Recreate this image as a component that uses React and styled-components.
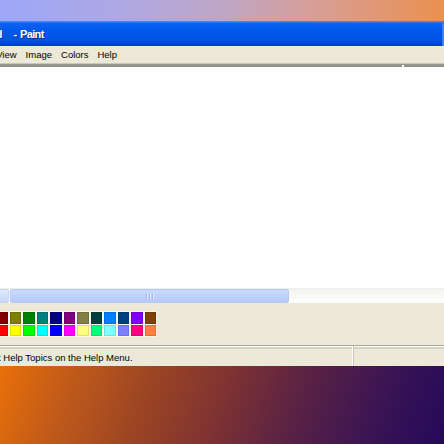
import React from "react";
import styled, { createGlobalStyle } from "styled-components";

const GlobalStyle = createGlobalStyle`
  html, body {
    margin: 0;
    padding: 0;
    overflow: hidden;
  }
  body {
    font-family: "Liberation Sans", Arial, sans-serif;
  }
`;

const PALETTE = [
  ["#000000", "#808080", "#800000", "#808000", "#008000", "#008080", "#000080", "#800080", "#808040", "#004040", "#0080ff", "#004080", "#8000ff", "#804000"],
  ["#ffffff", "#c0c0c0", "#ff0000", "#ffff00", "#00ff00", "#00ffff", "#0000ff", "#ff00ff", "#ffff80", "#00ff80", "#80ffff", "#8080ff", "#ff0080", "#ff8040"],
];

const MENU = ["File", "Edit", "View", "Image", "Colors", "Help"];

function App() {
  return (
    <>
      <GlobalStyle />
      <Page>
        <TopWallpaper />
        <Window>
          <TitleBar>
            <TitleText>
              <FileName>untitled</FileName> - Paint
            </TitleText>
          </TitleBar>
          <MenuBar>
            <MenuRow>
              {MENU.map((m) => (
                <MenuItem key={m}>{m}</MenuItem>
              ))}
            </MenuRow>
          </MenuBar>
          <WorkspaceEdge>
            <Handle />
          </WorkspaceEdge>
          <Canvas />
          <ScrollBar>
            <ScrollButton />
            <ScrollThumb>
              <Grip>
                <span />
                <span />
                <span />
              </Grip>
            </ScrollThumb>
            <ScrollTrack />
          </ScrollBar>
          <PaletteArea>
            <PaletteGrid>
              {PALETTE.flat().map((c, i) => (
                <Swatch key={i} $color={c} />
              ))}
            </PaletteGrid>
          </PaletteArea>
          <StatusBar>
            <StatusMain>
              <StatusText>For Help, click Help Topics on the Help Menu.</StatusText>
            </StatusMain>
            <StatusCell />
          </StatusBar>
        </Window>
        <BottomWallpaper />
      </Page>
    </>
  );
}

export default App;

const Page = styled.div`
  width: 444px;
  height: 444px;
  display: flex;
  flex-direction: column;
  overflow: hidden;
`;

const TopWallpaper = styled.div`
  height: 21px;
  flex: none;
  background: linear-gradient(90deg, #9ea7f8 0%, #aca8e6 25%, #bea6c6 50%, #d89e94 72%, #ea904e 100%);
`;

const Window = styled.div`
  display: flex;
  flex-direction: column;
  flex: none;
  background: #ece9d8;
`;

const TitleBar = styled.div`
  height: 25px;
  display: flex;
  align-items: center;
  overflow: hidden;
  background: linear-gradient(
    180deg,
    #4a92ff 0%,
    #0b62f2 10%,
    #0058ea 40%,
    #0054e3 75%,
    #0046cc 92%,
    #0a3aa8 100%
  );
  border-right: 2px solid #3c7ef0;
`;

const TitleText = styled.span`
  margin-left: -33px;
  color: #ffffff;
  font-weight: bold;
  font-size: 11px;
  letter-spacing: -0.6px;
  word-spacing: 1px;
  white-space: nowrap;
  text-shadow: 1px 1px 0 #0c2a8a;
  padding-top: 1px;
`;

const FileName = styled.span`
  margin-right: 8px;
`;

const MenuBar = styled.div`
  height: 17px;
  display: flex;
  align-items: center;
  overflow: hidden;
  background: #ece9d8;
`;

const MenuRow = styled.div`
  display: flex;
  margin-left: -58px;
`;

const MenuItem = styled.span`
  padding: 0 4.5px;
  font-size: 9.5px;
  color: #000000;
  white-space: nowrap;
`;

const WorkspaceEdge = styled.div`
  height: 4px;
  display: flex;
  justify-content: flex-end;
  align-items: flex-end;
  background: linear-gradient(180deg, #f4f2e8 0%, #9c9a92 25%, #8e8c86 100%);
`;

const Handle = styled.div`
  width: 2px;
  height: 2px;
  margin-right: 40px;
  background: #ffffff;
`;

const Canvas = styled.div`
  height: 221px;
  background: #ffffff;
`;

const ScrollBar = styled.div`
  height: 14px;
  display: flex;
  align-items: stretch;
  background: #f6f6f2;
  border-top: 1px solid #eeeeea;
  overflow: hidden;
`;

const ScrollButton = styled.div`
  width: 14px;
  margin-left: -7px;
  flex: none;
  border: 1px solid #c4d4f8;
  border-radius: 2px;
  background: linear-gradient(180deg, #dfe8fe 0%, #c8d7fb 100%);
`;

const ScrollThumb = styled.div`
  width: 277px;
  flex: none;
  margin-left: 1px;
  display: flex;
  align-items: center;
  justify-content: center;
  border: 1px solid #b5c8f5;
  border-radius: 2px;
  background: linear-gradient(180deg, #cedbfd 0%, #bccffb 60%, #b6cafa 100%);
`;

const Grip = styled.div`
  display: flex;
  gap: 1px;
  span {
    width: 1px;
    height: 5px;
    background: #9ab2ec;
    border-right: 1px solid #e6eeff;
  }
`;

const ScrollTrack = styled.div`
  flex: 1;
  background: linear-gradient(180deg, #f3f3ee 0%, #fdfdfb 100%);
`;

const PaletteArea = styled.div`
  height: 42px;
  padding-top: 9px;
  box-sizing: border-box;
  overflow: hidden;
  background: #ece9d8;
`;

const PaletteGrid = styled.div`
  display: grid;
  grid-template-columns: repeat(14, 11.5px);
  grid-auto-rows: 11.5px;
  column-gap: 2px;
  row-gap: 1px;
  margin-left: -31px;
`;

const Swatch = styled.div`
  background: ${(p) => p.$color};
  box-shadow: inset 0 0 0 1px rgba(0, 0, 0, 0.12);
  outline: 1px solid #f8f6ee;
`;

const StatusBar = styled.div`
  height: 20px;
  display: flex;
  background: #ece9d8;
  border-top: 1px solid #a9a79c;
  box-shadow: inset 0 1px 0 #ffffff, inset 0 3px 0 #d6d3c4;
  overflow: hidden;
`;

const StatusMain = styled.div`
  width: 353px;
  flex: none;
  display: flex;
  align-items: center;
  padding-top: 3px;
  box-sizing: border-box;
  border-right: 1px solid #ffffff;
  overflow: hidden;
`;

const StatusText = styled.span`
  margin-left: -59.5px;
  font-size: 9.5px;
  color: #000000;
  white-space: nowrap;
`;

const StatusCell = styled.div`
  flex: 1;
  border-left: 1px solid #c8c5b6;
`;

const BottomWallpaper = styled.div`
  flex: 1;
  background: linear-gradient(
    110deg,
    #e87008 0%,
    #c05a1a 16%,
    #9a4424 34%,
    #823430 48%,
    #5a2244 66%,
    #3a1454 84%,
    #24095a 100%
  );
`;
